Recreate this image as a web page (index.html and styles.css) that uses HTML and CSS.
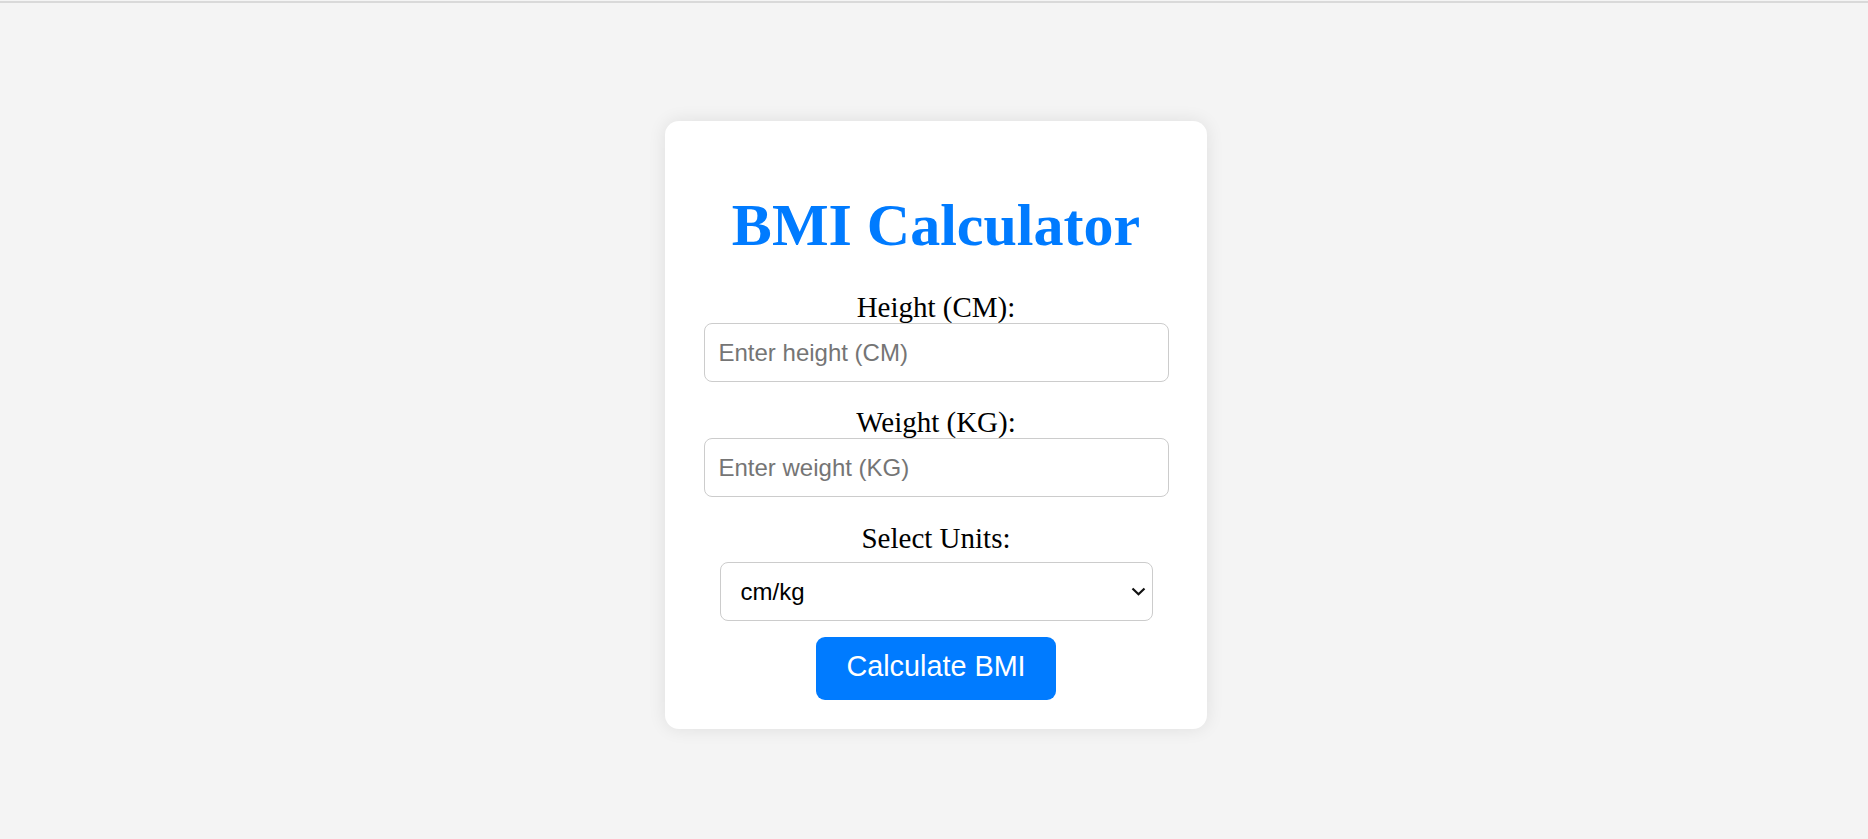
FILE: index.html
```html
<!DOCTYPE html>
<html lang="en">
<head>
<meta charset="utf-8">
<title>BMI Calculator</title>
<link rel="stylesheet" href="styles.css">
</head>
<body>
<div class="frame-line"></div>
<main class="page">
  <div class="card">
    <h1 class="title">BMI Calculator</h1>
    <label class="field-label" for="height">Height (CM):</label>
    <input class="field-input" id="height" type="number" placeholder="Enter height (CM)">
    <label class="field-label field-label--spaced" for="weight">Weight (KG):</label>
    <input class="field-input" id="weight" type="number" placeholder="Enter weight (KG)">
    <label class="field-label field-label--units" for="units">Select Units:</label>
    <select class="field-select" id="units">
      <option>cm/kg</option>
      <option>in/lb</option>
    </select>
    <button class="calc-btn" type="button">Calculate BMI</button>
  </div>
</main>
</body>
</html>
```

FILE: styles.css
```css
html, body {
  margin: 0;
  padding: 0;
  background: #f4f4f4;
}

body {
  height: 839px;
  overflow: hidden;
}

.frame-line {
  margin-top: 1px;
  height: 2px;
  background: #d9d9d9;
}

.page {
  display: flex;
  justify-content: center;
  padding-top: 118px;
  padding-left: 4px;
}

.card {
  box-sizing: border-box;
  width: 542px;
  background: #ffffff;
  border-radius: 14px;
  box-shadow: 0 0 18px rgba(0, 0, 0, 0.09);
  padding: 36px 0 29px;
  display: flex;
  flex-direction: column;
  align-items: center;
}

.title {
  margin: 36px 0 33px;
  font-family: "Liberation Serif", "Times New Roman", serif;
  font-weight: bold;
  font-size: 60px;
  line-height: 65px;
  color: #007bff;
}

.field-label {
  display: block;
  font-family: "Liberation Serif", "Times New Roman", serif;
  font-size: 29px;
  line-height: 32px;
  color: #000;
  text-align: center;
}

.field-label--spaced {
  margin-top: 24px;
}

.field-label--units {
  margin-top: 25px;
}

.field-input {
  box-sizing: border-box;
  width: 465px;
  height: 59px;
  margin: 0;
  padding: 0 14px;
  border: 1px solid #cccccc;
  border-radius: 8px;
  font-family: "Liberation Sans", Arial, sans-serif;
  font-size: 24px;
  color: #000;
  background: #fff;
  outline: none;
  -moz-appearance: textfield;
}

.field-input::-webkit-outer-spin-button,
.field-input::-webkit-inner-spin-button {
  -webkit-appearance: none;
  margin: 0;
}

.field-input::placeholder {
  color: #757575;
}

.field-select {
  box-sizing: border-box;
  width: 433px;
  height: 59px;
  margin-top: 8px;
  padding: 0 40px 0 20px;
  border: 1px solid #cccccc;
  border-radius: 8px;
  font-family: "Liberation Sans", Arial, sans-serif;
  font-size: 24px;
  color: #000;
  -webkit-appearance: none;
  appearance: none;
  background-color: #fff;
  background-image: url("data:image/svg+xml,%3Csvg xmlns='http://www.w3.org/2000/svg' width='15' height='9' viewBox='0 0 15 9'%3E%3Cpath d='M1.5 1.5 L7.5 7.3 L13.5 1.5' fill='none' stroke='%23111' stroke-width='2.2'/%3E%3C/svg%3E");
  background-repeat: no-repeat;
  background-position: right 6px center;
  background-size: 15px 9px;
  outline: none;
}

.calc-btn {
  margin-top: 16px;
  height: 63px;
  padding: 13px 30px 17px;
  border: none;
  border-radius: 9px;
  background: #007bff;
  color: #ffffff;
  font-family: "Liberation Sans", Arial, sans-serif;
  font-size: 28.8px;
  line-height: 33px;
  cursor: pointer;
}
```
